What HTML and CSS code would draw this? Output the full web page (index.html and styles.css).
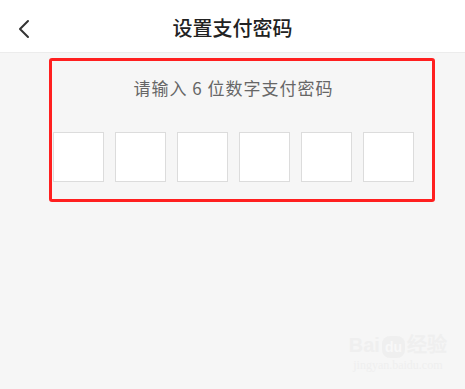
FILE: index.html
```html
<!DOCTYPE html>
<html lang="zh-CN">
  <head>
    <meta charset="UTF-8" />
    <meta name="viewport" content="width=device-width, initial-scale=1.0" />
    <title>设置支付密码</title>
    <link rel="stylesheet" href="styles.css">
  </head>
  <body>
    <div class="header">
      <span class="back">
        <svg width="14" height="20" viewBox="0 0 14 20">
          <path d="M11 2 L3 10 L11 18" fill="none" stroke="#333" stroke-width="2" stroke-linecap="round" stroke-linejoin="round" />
        </svg>
      </span>
      <h1 class="title">设置支付密码</h1>
    </div>

    <div class="content">
      <p class="tip">请输入 6 位数字支付密码</p>
      <div class="boxes">
        <div class="box"></div>
        <div class="box"></div>
        <div class="box"></div>
        <div class="box"></div>
        <div class="box"></div>
        <div class="box"></div>
      </div>
      <div class="mark"></div>
    </div>

    <div class="watermark">
      <div class="wm-logo">Bai<span class="wm-du">du</span>经验</div>
      <div class="wm-url">jingyan.baidu.com</div>
    </div>
  </body>
</html>
```

FILE: styles.css
```css
html {
  font-family: "Noto Sans CJK SC", "Noto Sans", sans-serif;
}

body {
  margin: 0;
  height: 389px;
  background-color: #f6f6f6;
  overflow: hidden;
  position: relative;
}

.header {
  height: 52px;
  background-color: #fff;
  border-bottom: 1px solid #ececec;
  display: flex;
  align-items: center;
  justify-content: center;
  position: relative;
}

.back {
  position: absolute;
  left: 17px;
  top: 19px;
  width: 14px;
  height: 20px;
}

.title {
  margin: 0;
  font-size: 20px;
  font-weight: 500;
  color: #222;
  line-height: 28px;
  margin-top: 4px;
}

.content {
  position: relative;
  padding-top: 23px;
}

.tip {
  margin: 0;
  text-align: center;
  font-size: 17px;
  font-weight: 400;
  letter-spacing: 1px;
  line-height: 24px;
  color: #666;
  margin-left: 2px;
}

.boxes {
  display: flex;
  justify-content: center;
  gap: 11px;
  margin-top: 32px;
  padding-left: 2px;
}

.box {
  width: 49px;
  height: 48px;
  background-color: #fff;
  border: 1px solid #dcdcdc;
}

.mark {
  position: absolute;
  left: 49px;
  top: 5px;
  width: 380px;
  height: 138px;
  border: 3px solid #ff1f1f;
  border-radius: 3px;
}

.watermark {
  position: absolute;
  right: 18px;
  bottom: 16px;
  text-align: center;
  font-family: "Liberation Sans", sans-serif;
}

.wm-logo {
  font-size: 20px;
  font-weight: bold;
  line-height: 22px;
  color: #efefef;
}

.wm-du {
  display: inline-block;
  background-color: #efefef;
  color: #f8f8f8;
  border-radius: 8px;
  font-size: 14px;
  padding: 0 3px;
  margin: 0 2px;
}

.wm-url {
  font-family: "Liberation Serif", serif;
  font-size: 12px;
  color: #efefef;
}
```
